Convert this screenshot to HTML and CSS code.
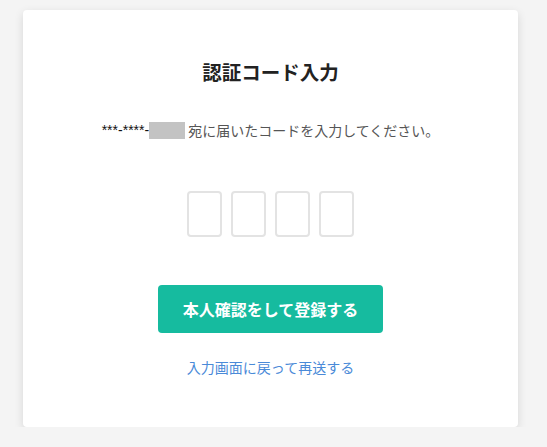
FILE: index.html
```html
<!DOCTYPE html>
<html lang="ja">
<head>
  <meta charset="UTF-8" />
  <title>認証コード入力</title>
  <link rel="stylesheet" href="styles.css">
</head>
<body>
  <section class="card">
    <h1 class="title">認証コード入力</h1>
    <p class="lead">
      <span class="tel">***-****-</span><span class="mask"></span>
      宛に届いたコードを入力してください。
    </p>
    <div class="codes">
      <input class="code" type="text" maxlength="1">
      <input class="code" type="text" maxlength="1">
      <input class="code" type="text" maxlength="1">
      <input class="code" type="text" maxlength="1">
    </div>
    <button class="btn">本人確認をして登録する</button>
    <a class="back" href="#">入力画面に戻って再送する</a>
  </section>
</body>
</html>
```

FILE: styles.css
```css
body   {margin:0; padding:10px 0 0 23px; background:#f4f4f4; font-family:"Noto Sans CJK JP", "Noto Sans", sans-serif; color:#333;}
.card  {width:495px; height:417px; box-sizing:border-box; background:#fff; border-radius:4px; box-shadow:0 3px 10px rgba(0,0,0,0.12);
        display:flex; flex-direction:column; align-items:center; padding-top:48px;}
.title {margin:0; font-size:19.5px; font-weight:bold; line-height:28px; color:#222;}
.lead  {margin:34px 0 0; font-size:14px; line-height:20px; color:#555; display:flex; align-items:center;}
.tel   {color:#111; font-size:14px; font-family:"Liberation Sans", sans-serif;}
.mask  {display:inline-block; width:36px; height:17px; background:#c3c3c3; margin-right:3px;}
.codes {display:flex; gap:9px; margin-top:51px;}
.code  {width:35px; height:46px; box-sizing:border-box; border:2px solid #e3e3e3; border-radius:4px; padding:0; text-align:center; font-size:18px;}
.btn   {margin-top:48px; width:225px; height:48px; border:none; border-radius:4px; background:#16bb9f; color:#fff;
        font-family:inherit; font-size:16px; font-weight:bold; cursor:pointer;}
.back  {margin-top:24px; font-size:14px; line-height:20px; color:#4a8ad8; text-decoration:none;}
```
